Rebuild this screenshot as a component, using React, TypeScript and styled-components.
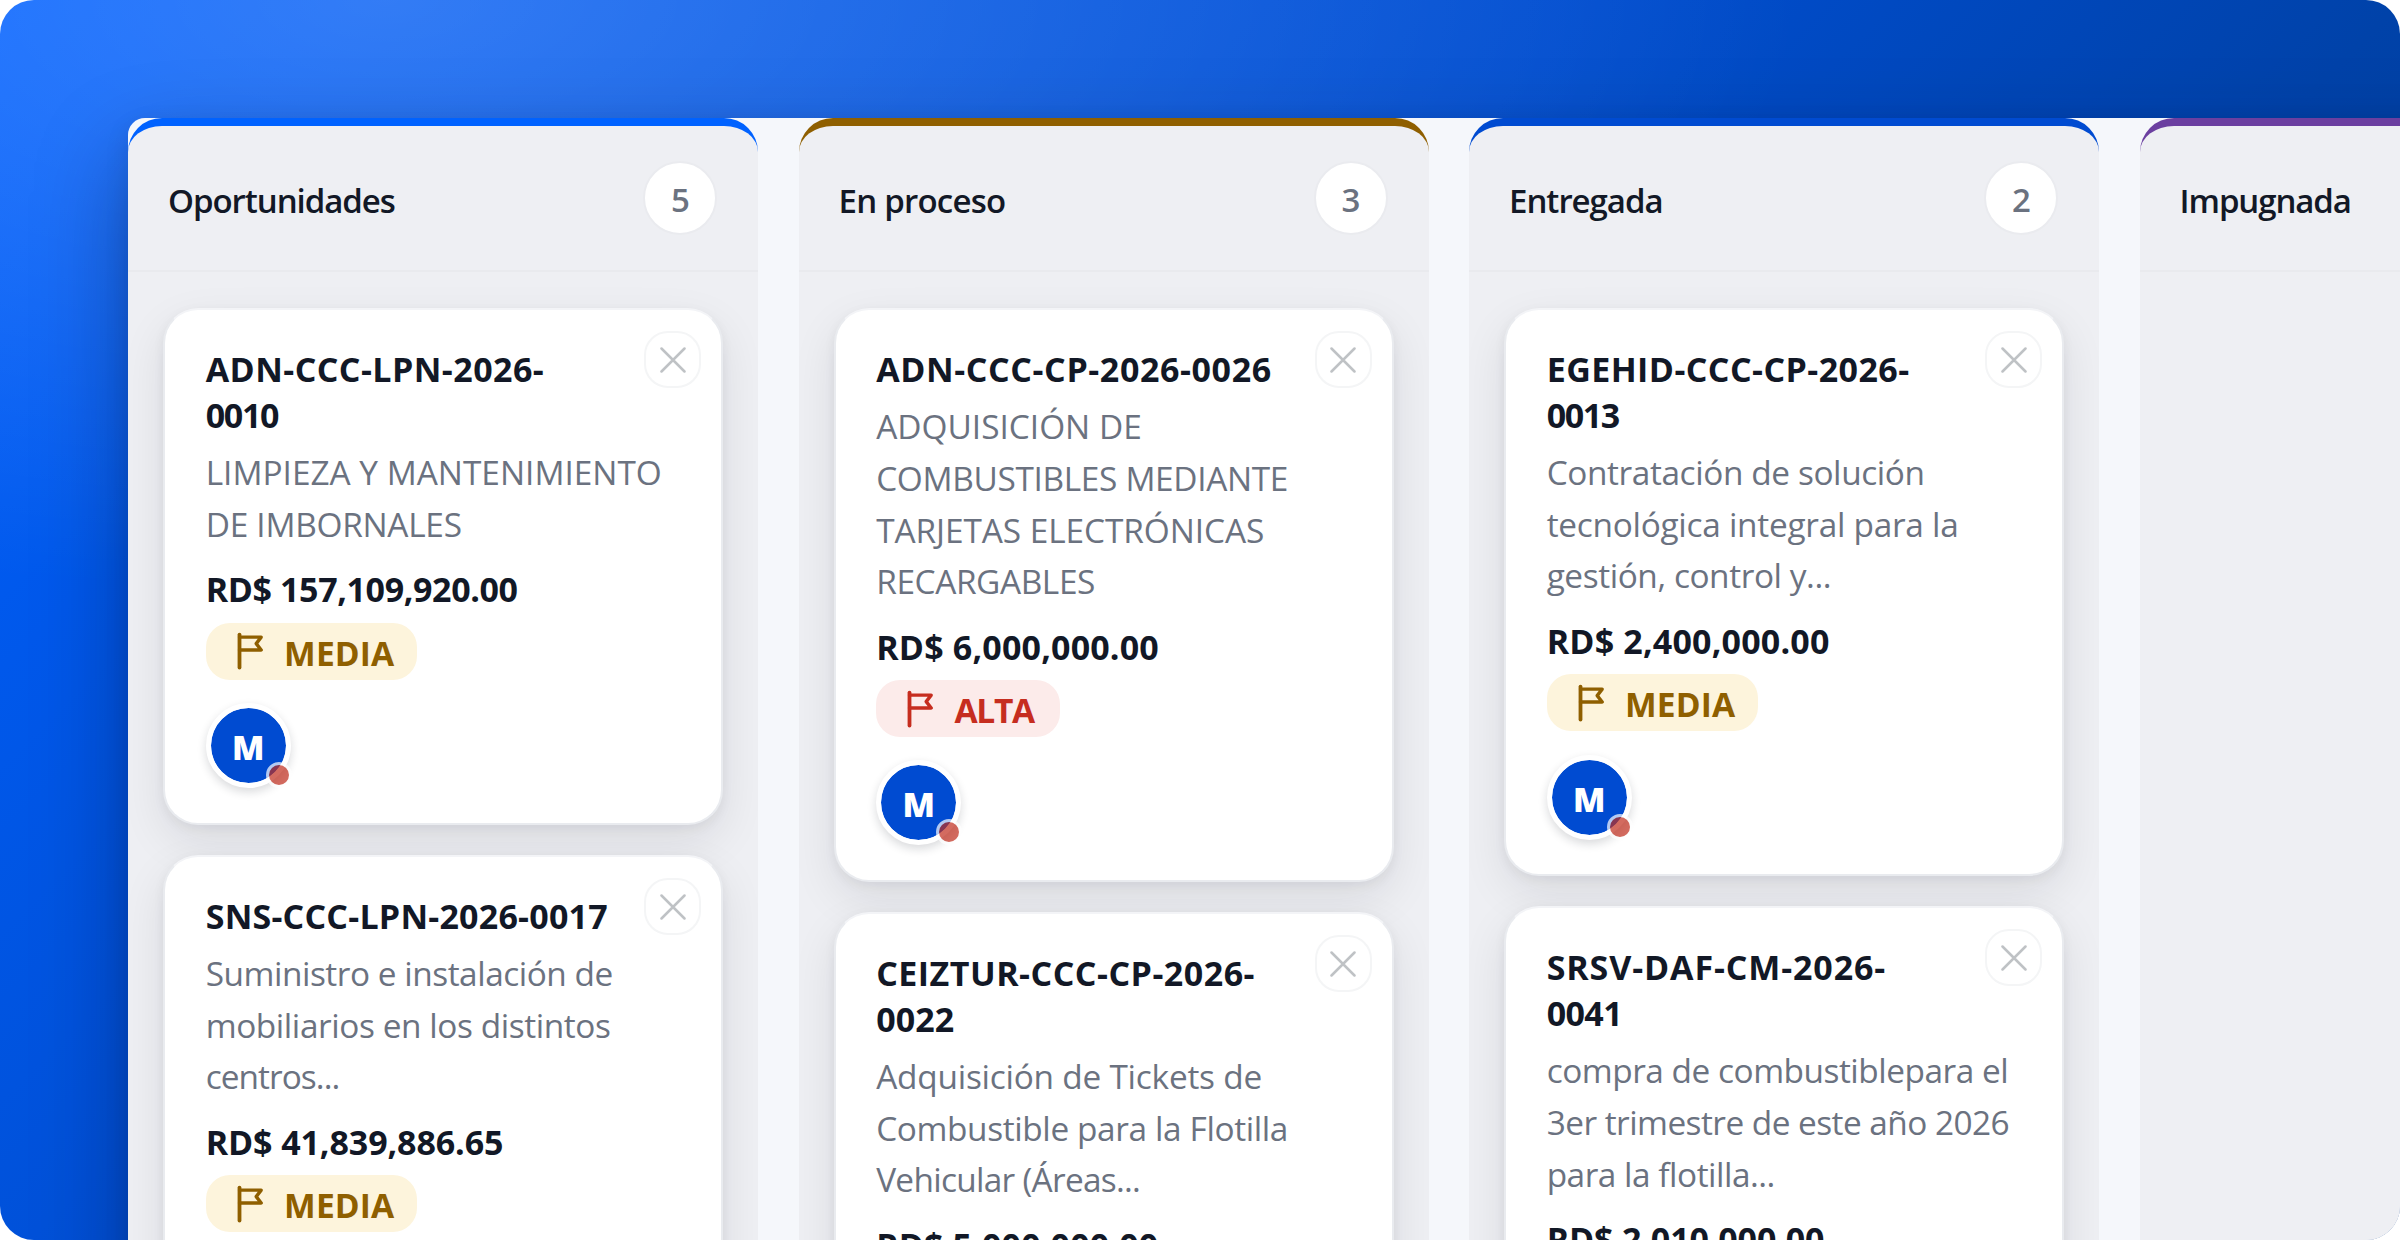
import React from "react";
import styled, { createGlobalStyle } from "styled-components";

type Line = { text: string; track: number };
type Level = "media" | "alta";
type CardData = { code: Line[]; summary: Line[]; amount: Line; level: Level };
type ColumnData = { title: Line; accent: string; count?: number; cards: CardData[] };

const l = (text: string, track = 0): Line => ({ text, track });

const columns: ColumnData[] = [
  {
    title: l("Oportunidades", -1.05),
    accent: "#0062ff",
    count: 5,
    cards: [
      {
        code: [l("ADN-CCC-LPN-2026-", 0.44), l("0010", -1.3)],
        summary: [l("LIMPIEZA Y MANTENIMIENTO", 0), l("DE IMBORNALES", -0.27)],
        amount: l("RD$ 157,109,920.00", -0.38),
        level: "media",
      },
      {
        code: [l("SNS-CCC-LPN-2026-0017", 0.22)],
        summary: [
          l("Suministro e instalación de", -0.47),
          l("mobiliarios en los distintos", -0.42),
          l("centros...", -0.95),
        ],
        amount: l("RD$ 41,839,886.65", -0.1),
        level: "media",
      },
    ],
  },
  {
    title: l("En proceso", -0.77),
    accent: "#8f5f00",
    count: 3,
    cards: [
      {
        code: [l("ADN-CCC-CP-2026-0026", 0.6)],
        summary: [
          l("ADQUISICIÓN DE", 0),
          l("COMBUSTIBLES MEDIANTE", -0.33),
          l("TARJETAS ELECTRÓNICAS", -0.07),
          l("RECARGABLES", -0.4),
        ],
        amount: l("RD$ 6,000,000.00", 0.18),
        level: "alta",
      },
      {
        code: [l("CEIZTUR-CCC-CP-2026-", 0.49), l("0022", 0.1)],
        summary: [
          l("Adquisición de Tickets de", -0.23),
          l("Combustible para la Flotilla", -0.38),
          l("Vehicular (Áreas...", -0.71),
        ],
        amount: l("RD$ 5,000,000.00", 0.14),
        level: "media",
      },
    ],
  },
  {
    title: l("Entregada", -1.03),
    accent: "#004bd1",
    count: 2,
    cards: [
      {
        code: [l("EGEHID-CCC-CP-2026-", 0.43), l("0013", -1.4)],
        summary: [
          l("Contratación de solución", -0.4),
          l("tecnológica integral para la", -0.27),
          l("gestión, control y...", -0.42),
        ],
        amount: l("RD$ 2,400,000.00", 0.19),
        level: "media",
      },
      {
        code: [l("SRSV-DAF-CM-2026-", 0.88), l("0041", -0.6)],
        summary: [
          l("compra de combustiblepara el", -0.48),
          l("3er trimestre de este año 2026", -0.54),
          l("para la flotilla...", -0.48),
        ],
        amount: l("RD$ 2,010,000.00", -0.14),
        level: "media",
      },
    ],
  },
  { title: l("Impugnada", -1.1), accent: "#6b3fa0", cards: [] },
];

const levels = {
  media: { label: l("MEDIA", 0.15), ink: "#8f5f00", fill: "#fdf4dc", endPad: 22.8 },
  alta: { label: l("ALTA", -1.4), ink: "#c62d1f", fill: "#fcebea", endPad: 25.8 },
};

const GlobalStyle = createGlobalStyle`
  body { margin: 0; background: #fff; }
  * { box-sizing: border-box; }
`;

const Stage = styled.main`
  width: 2400px;
  height: 1240px;
  overflow: hidden;
  border-radius: 34px;
  padding: 118px 0 0 128.4px;
  background:
    radial-gradient(1420px 600px at 16% 0%, rgba(255, 255, 255, 0.2), rgba(255, 255, 255, 0)),
    linear-gradient(135deg, #0060ff 0%, #004dcf 44%, #0042a9 66%, #003585 100%);
  font-family: "Open Sans", "Noto Sans", sans-serif;
`;

const Board = styled.div`
  display: flex;
  gap: 40.4px;
  width: 2900px;
  height: 1300px;
  overflow: hidden;
  border-radius: 17px;
  background: #f5f7fb;
`;

const BoardShadow = styled.div`
  width: 2900px;
  border-radius: 17px;
  box-shadow: 0 40px 90px rgba(0, 10, 40, 0.36), 0 8px 24px rgba(0, 10, 40, 0.1);
`;

const Column = styled.section<{ $accent: string }>`
  display: flex;
  flex-direction: column;
  flex: 0 0 630.1px;
  overflow: hidden;
  border-top: 8.4px solid ${(p) => p.$accent};
  border-radius: 34px;
  background: #eeeff3;
`;

const ColumnHeader = styled.header`
  display: flex;
  flex: none;
  align-items: center;
  justify-content: space-between;
  height: 146.4px;
  padding: 0 41px 0 39.7px;
  border-bottom: 2px solid #e9eaee;
`;

const ColumnTitle = styled.h2<{ $track: number }>`
  margin: 0;
  padding-top: 5px;
  color: #121826;
  font-size: 33px;
  font-weight: 600;
  line-height: 46px;
  letter-spacing: ${(p) => p.$track}px;
`;

const Count = styled.span`
  display: flex;
  align-items: center;
  justify-content: center;
  width: 74px;
  height: 74px;
  padding-top: 4px;
  border: 2px solid #eaebef;
  border-radius: 50%;
  background: #fff;
  color: #6b7280;
  font-size: 33px;
  font-weight: 600;
  line-height: 46px;
`;

const CardList = styled.div`
  display: flex;
  flex-direction: column;
  gap: 30px;
  padding: 35.8px 35px;
`;

const CardBox = styled.article`
  position: relative;
  display: flex;
  flex-direction: column;
  align-items: flex-start;
  padding: 37px 38px 34.9px 40.3px;
  border: 2px solid #e9ebef;
  border-top-color: #f3f4f7;
  border-radius: 35px;
  background: #fff;
  box-shadow: 0 17px 46px rgba(17, 24, 33, 0.09), 0 4px 12px rgba(17, 24, 33, 0.06);
`;

const Strong = styled.div<{ $track: number }>`
  color: #121826;
  font-size: 34px;
  font-weight: 700;
  line-height: 45.75px;
  letter-spacing: ${(p) => p.$track}px;
  white-space: nowrap;
`;

const Code = styled.div`
  margin-bottom: 8.4px;
`;

const Summary = styled.div`
  margin-bottom: 17.2px;
`;

const SummaryLine = styled.div<{ $track: number }>`
  color: #6b7280;
  font-size: 33.4px;
  line-height: 51.6px;
  letter-spacing: ${(p) => p.$track}px;
  white-space: nowrap;
`;

const Tag = styled.div<{ $ink: string; $fill: string; $track: number; $endPad: number }>`
  display: flex;
  align-items: center;
  gap: 21.4px;
  height: 57px;
  margin: 9.5px 0 23.3px;
  padding: 0 ${(p) => p.$endPad}px 0 31px;
  border-radius: 24px;
  background: ${(p) => p.$fill};
  color: ${(p) => p.$ink};
  font-size: 33.6px;
  font-weight: 700;
  line-height: 46px;
  letter-spacing: ${(p) => p.$track}px;

  span {
    padding-top: 3px;
  }
`;

const Close = styled.button`
  position: absolute;
  top: 21px;
  right: 20px;
  display: flex;
  align-items: center;
  justify-content: center;
  width: 57px;
  height: 57px;
  padding: 1px 0 0;
  border: 2px solid #f4f5f6;
  border-radius: 24px;
  background: #fff;
  color: #bfc2c5;
`;

const Avatar = styled.div`
  position: relative;
  display: flex;
  align-items: center;
  justify-content: center;
  width: 85px;
  height: 85px;
  padding-top: 3px;
  border: 5px solid #fff;
  border-radius: 50%;
  background: #004bd1;
  background-clip: padding-box;
  box-shadow: 0 4px 10px rgba(17, 24, 39, 0.16);
  color: #fff;
  font-size: 33.6px;
  font-weight: 800;
  line-height: 46px;
`;

const Presence = styled.i`
  position: absolute;
  right: -6px;
  bottom: -5px;
  width: 26px;
  height: 26px;
  border: 3px solid #fff;
  border-radius: 50%;
  background: #c12d1d;
  opacity: 0.7;
`;

const FlagIcon = () => (
  <svg width="26" height="38" viewBox="0 0 26 38" fill="none" stroke="currentColor" strokeWidth="3.4" strokeLinecap="round" strokeLinejoin="round">
    <path d="M2.5 2.6V35.6" strokeWidth="3.8" />
    <path d="M2.5 5.1H24.2L19.2 11.6L24.2 18H2.5" />
  </svg>
);

const CloseIcon = () => (
  <svg width="26" height="26" viewBox="0 0 26 26" fill="none" stroke="currentColor" strokeWidth="2.5" strokeLinecap="round">
    <path d="M1.5 1.5L24.5 24.5M24.5 1.5L1.5 24.5" />
  </svg>
);

const Card = ({ card }: { card: CardData }) => {
  const level = levels[card.level];
  return (
    <CardBox>
      <Close aria-label="Cerrar">
        <CloseIcon />
      </Close>
      <Code>
        {card.code.map((c) => (
          <Strong key={c.text} $track={c.track}>{c.text}</Strong>
        ))}
      </Code>
      <Summary>
        {card.summary.map((s) => (
          <SummaryLine key={s.text} $track={s.track}>{s.text}</SummaryLine>
        ))}
      </Summary>
      <Strong $track={card.amount.track}>{card.amount.text}</Strong>
      <Tag $ink={level.ink} $fill={level.fill} $track={level.label.track} $endPad={level.endPad}>
        <FlagIcon />
        <span>{level.label.text}</span>
      </Tag>
      <Avatar>
        M
        <Presence />
      </Avatar>
    </CardBox>
  );
};

export default function App() {
  return (
    <>
      <GlobalStyle />
      <Stage>
        <BoardShadow>
          <Board>
            {columns.map((col) => (
              <Column key={col.title.text} $accent={col.accent}>
                <ColumnHeader>
                  <ColumnTitle $track={col.title.track}>{col.title.text}</ColumnTitle>
                  {col.count !== undefined && <Count>{col.count}</Count>}
                </ColumnHeader>
                <CardList>
                  {col.cards.map((card) => (
                    <Card key={card.code[0].text} card={card} />
                  ))}
                </CardList>
              </Column>
            ))}
          </Board>
        </BoardShadow>
      </Stage>
    </>
  );
}
